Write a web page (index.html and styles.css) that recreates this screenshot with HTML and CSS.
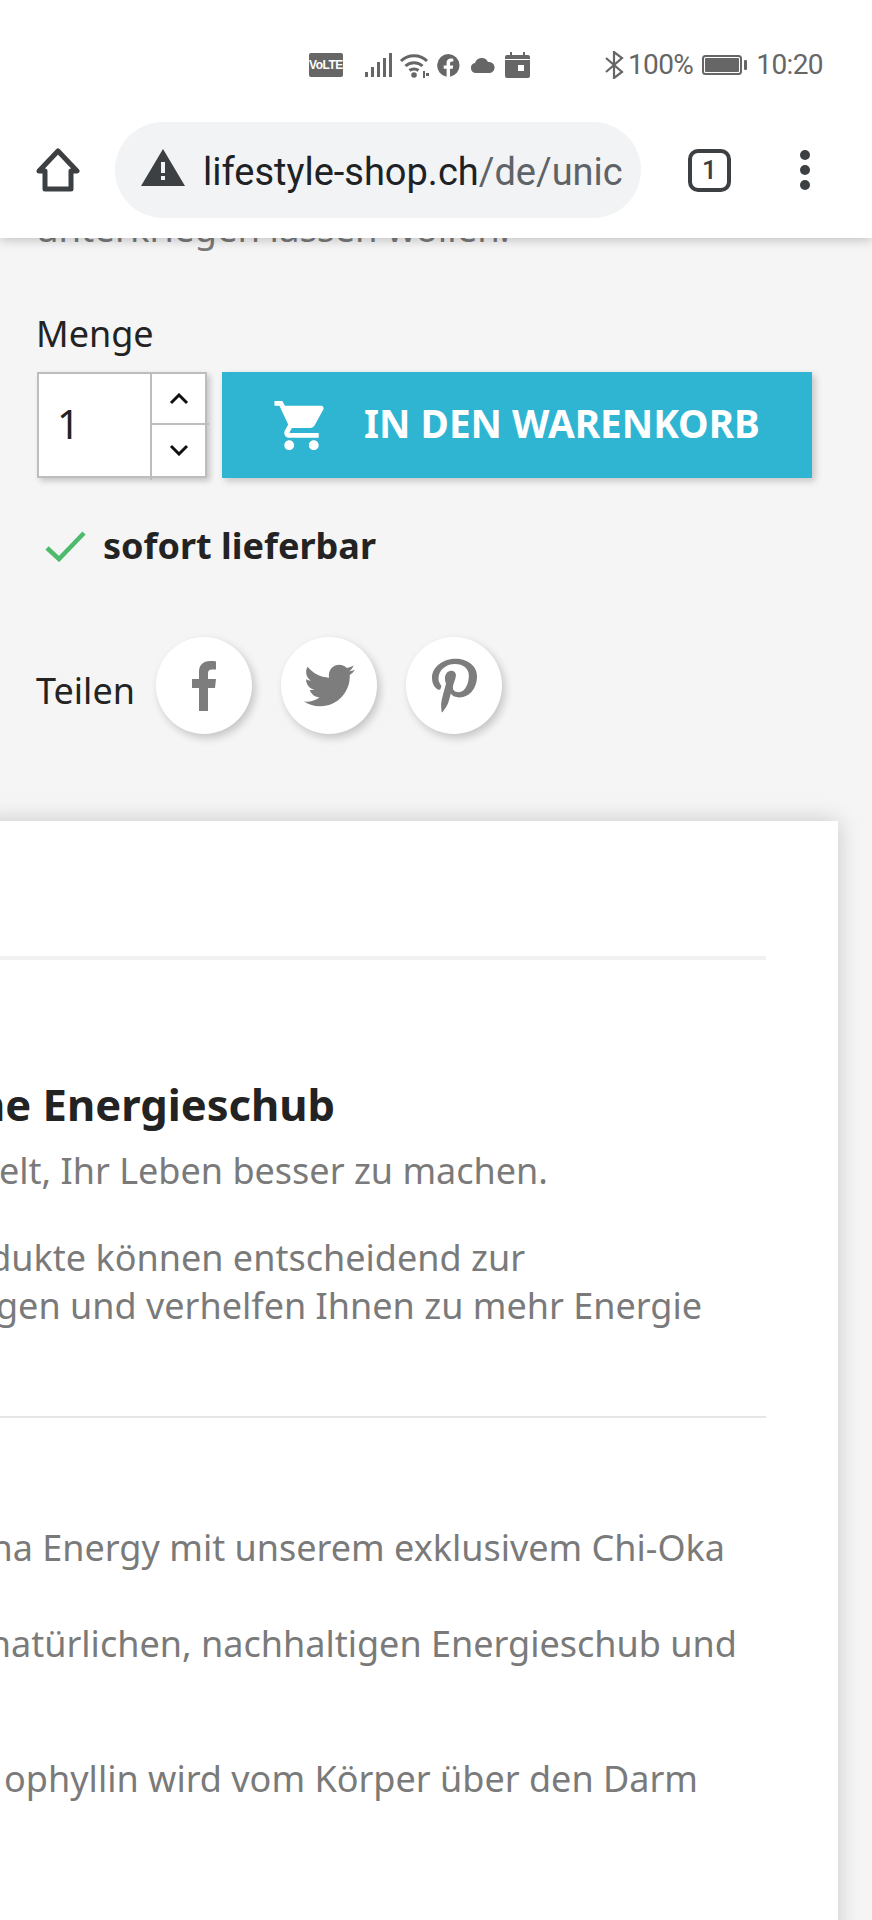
FILE: index.html
```html
<!DOCTYPE html>
<html lang="de">
<head>
<meta charset="utf-8">
<title>Lifestyle Shop</title>
<link rel="stylesheet" href="styles.css">
</head>
<body>
<header class="chrome">
  <div class="status">
    <span class="volte">VoLTE</span>
    <svg class="ic-signal" viewBox="0 0 27 24"><path d="M0 19h3v5H0zM6 14h3v10H6zM12 9h3v15h-3zM18 5h3v19h-3zM24 0h3v24h-3z"/></svg>
    <svg class="ic-wifi" viewBox="0 0 30 26"><path class="arc" d="M2 9c7-7 19-7 26 0M6.500 14c4.500-4.500 12.500-4.500 17 0M10.500 18.500c2.500-2 6.500-2 9 0"/><circle cx="15" cy="23" r="2.800"/><path d="M24 19h2v7h-2zM27 21h3v3h-3z"/></svg>
    <svg class="ic-fb" viewBox="0 0 24 24"><path d="M12 0a12 12 0 0 0-2 23.800v-8.400H7V12h3V9.400c0-3 1.800-4.600 4.500-4.600 1.300 0 2.500.2 2.500.2v2.900h-1.400c-1.500 0-2 .9-2 1.900V12h3.300l-.5 3.400h-2.800v8.400A12 12 0 0 0 12 0z"/></svg>
    <svg class="ic-cloud" viewBox="0 0 24 16"><path d="M5 16a5 5 0 0 1-1-9.900A7 7 0 0 1 17 5a5.500 5.500 0 0 1 2 11z"/></svg>
    <svg class="ic-cal" viewBox="0 0 25 26"><path fill-rule="evenodd" d="M5 0h2v3h11V0h2v3h3a2 2 0 0 1 2 2v19a2 2 0 0 1-2 2H2a2 2 0 0 1-2-2V5a2 2 0 0 1 2-2h3zM0 7v1h25V7zM13 13v6h6v-6z"/></svg>
    <svg class="ic-bt" viewBox="0 0 20 28"><path class="arc thin" d="M2 7l16 14-8 6V1l8 6L2 21"/></svg>
    <span class="pct">100%</span>
    <svg class="ic-bat" viewBox="0 0 45 20"><rect class="batline" x="1" y="1" width="38" height="18" rx="2.500"/><rect x="3" y="3" width="34" height="14" rx="1"/><rect x="42" y="5" width="3" height="10" rx="1"/></svg>
    <span class="time">10:20</span>
  </div>
  <div class="toolbar">
    <svg class="ic-home" viewBox="0 0 44 44"><path d="M22 3 41 23H35V41H9V23H3Z"/></svg>
    <div class="omnibox">
      <svg class="ic-warn" viewBox="0 0 44 37"><path fill-rule="evenodd" d="M22 0 44 37H0ZM20 13v11h4V13zM20 27v4h4v-4z"/></svg>
      <span class="url"><span class="host">lifestyle-shop.ch</span>/de/unic</span>
    </div>
    <span class="tabs">1</span>
    <span class="dots"><i></i><i></i><i></i></span>
  </div>
</header>
<main class="page">
  <p class="clipped">unterkriegen lassen wollen.</p>
  <label class="menge">Menge</label>
  <div class="buy">
    <div class="qty">
      <span class="qty-val">1</span>
      <span class="qty-btn"><svg viewBox="0 0 20 12"><path d="M2 10l8-8 8 8"/></svg></span>
      <span class="qty-btn qty-down"><svg viewBox="0 0 20 12"><path d="M2 2l8 8 8-8"/></svg></span>
    </div>
    <button class="cart">
      <svg viewBox="0 0 24 24"><path d="M7 18c-1.100 0-1.990.9-1.990 2S5.900 22 7 22s2-.9 2-2-.9-2-2-2zM1 2v2h2l3.600 7.590-1.350 2.450c-.16.28-.25.61-.25.96 0 1.100.9 2 2 2h12v-2H7.420c-.14 0-.25-.11-.25-.25l.03-.12.9-1.630h7.450c.75 0 1.410-.41 1.750-1.030l3.580-6.490c.08-.14.12-.31.12-.48 0-.55-.45-1-1-1H5.210l-.94-2H1zm16 16c-1.100 0-1.990.9-1.990 2s.89 2 1.990 2 2-.9 2-2-.9-2-2-2z"/></svg>
      <span>IN DEN WARENKORB</span>
    </button>
  </div>
  <div class="avail">
    <svg viewBox="0 0 41 31"><path d="M2 17l12 11L39 2"/></svg>
    <strong>sofort lieferbar</strong>
  </div>
  <div class="share">
    <span class="share-label">Teilen</span>
    <a class="soc"><svg class="s-fb" viewBox="0 0 24 50"><path d="M7 50V27H0v-9h7v-7C7 4 11 0 18 0c3 0 5 .2 6 .4v8h-4c-3 0-4 1.500-4 4v5.600h8l-1 9h-7v23z"/></svg></a>
    <a class="soc"><svg class="s-tw" viewBox="0 0 512 512"><path d="M459.370 151.716c.325 4.548.325 9.097.325 13.645 0 138.720-105.583 298.558-298.558 298.558-59.452 0-114.680-17.219-161.137-47.106 8.447.974 16.568 1.299 25.340 1.299 49.055 0 94.213-16.568 130.274-44.832-46.132-.975-84.792-31.188-98.112-72.772 6.498.974 12.995 1.624 19.818 1.624 9.421 0 18.843-1.300 27.614-3.573-48.081-9.747-84.143-51.980-84.143-102.985v-1.299c13.969 7.797 30.214 12.670 47.431 13.319-28.264-18.843-46.781-51.005-46.781-87.391 0-19.492 5.197-37.360 14.294-52.954 51.655 63.675 129.300 105.258 216.365 109.807-1.624-7.797-2.599-15.918-2.599-24.040 0-57.828 46.782-104.934 104.934-104.934 30.213 0 57.502 12.670 76.670 33.137 23.715-4.548 46.456-13.320 66.599-25.340-7.798 24.366-24.366 44.833-46.132 57.827 21.117-2.273 41.584-8.122 60.426-16.243-14.292 20.791-32.161 39.308-52.628 54.253z"/></svg></a>
    <a class="soc"><svg class="s-pin" viewBox="0 0 384 512" preserveAspectRatio="none"><path d="M204 6.500C101.400 6.500 0 74.900 0 185.600 0 256 39.600 296 63.600 296c9.900 0 15.600-27.600 15.600-35.400 0-9.300-23.700-29.100-23.700-67.800 0-80.400 61.200-137.400 140.400-137.400 68.100 0 118.500 38.700 118.500 109.800 0 53.100-21.300 152.700-90.300 152.700-24.900 0-46.200-18-46.200-43.800 0-37.800 26.400-74.400 26.400-113.400 0-66.200-93.900-54.200-93.900 25.800 0 16.800 2.100 35.400 9.600 50.700-13.800 59.400-42 147.900-42 209.100 0 18.900 2.700 37.500 4.500 56.400 3.400 3.800 1.700 3.400 6.900 1.500 50.400-69 48.600-82.500 71.400-172.800 12.300 23.400 44.100 36 69.300 36 106.200 0 153.900-103.500 153.900-196.800C384 71.300 298.200 6.500 204 6.500z"/></svg></a>
  </div>
  <section class="card">
    <hr class="rule-top">
    <h2 class="ln head">ne Energieschub</h2>
    <p class="ln l1">elt, Ihr Leben besser zu machen.</p>
    <p class="ln l2">dukte können entscheidend zur</p>
    <p class="ln l3">gen und verhelfen Ihnen zu mehr Energie</p>
    <hr class="rule-mid">
    <p class="ln l4">na Energy mit unserem exklusivem Chi-Oka</p>
    <p class="ln l5">natürlichen, nachhaltigen Energieschub und</p>
    <p class="ln l6">ophyllin wird vom Körper über den Darm</p>
  </section>
</main>
</body>
</html>
```
FILE: styles.css
```css
* { box-sizing: border-box; }
html, body { margin: 0; padding: 0; height: 1920px; overflow: hidden; }
body { width: 872px; background: #f5f5f5; font-family: "Noto Sans", sans-serif; font-size: 36px; line-height: 48px; color: #232323; }

.chrome { position: relative; z-index: 2; height: 238px; background: #fff; box-shadow: 0 2px 10px rgba(0,0,0,.22); }
.status { height: 102px; padding: 28px 49px 0 0; display: flex; align-items: center; justify-content: flex-end; color: #666; fill: #666; font-family: Roboto, sans-serif; font-size: 28px; letter-spacing: -.6px; }
.status svg { display: block; flex: none; }
.arc { fill: none; stroke: #666; stroke-width: 3; }
.arc.thin { stroke-width: 2.200; }
.volte { width: 34px; height: 24px; background: #666; color: #fff; border-radius: 2px; font: 700 12px/24px "Liberation Sans", sans-serif; letter-spacing: -.5px; text-align: center; }
.ic-signal { width: 27px; height: 24px; margin-left: 22px; }
.ic-wifi { width: 30px; height: 26px; margin-left: 7px; }
.ic-fb { width: 23px; height: 23px; margin-left: 8px; }
.ic-cloud { width: 24px; height: 16px; margin-left: 11px; }
.ic-cal { width: 25px; height: 26px; margin-left: 10px; }
.ic-bt { width: 20px; height: 28px; margin-left: 74px; }
.pct { margin-left: 4px; }
.ic-bat { width: 45px; height: 20px; margin-left: 9px; }
.batline { fill: none; stroke: #666; stroke-width: 2; }
.time { margin-left: 9px; }

.toolbar { height: 136px; display: flex; align-items: center; }
.ic-home { width: 44px; height: 44px; margin-left: 36px; fill: none; stroke: #3c4043; stroke-width: 5; stroke-linejoin: round; flex: none; }
.omnibox { width: 526px; height: 96px; margin-left: 35px; padding: 0 18px 0 26px; background: #f1f3f4; border-radius: 48px; display: flex; align-items: center; flex: none; }
.ic-warn { width: 44px; height: 37px; margin-bottom: 5px; fill: #3c4043; flex: none; }
.url { margin: 3px 0 0 18px; white-space: nowrap; font: 38px/48px Roboto, sans-serif; color: #5f6368; }
.host { color: #202124; }
.tabs { width: 43px; height: 43px; margin-left: 47px; border: 4px solid #3c4043; border-radius: 10px; font: 500 26px/35px Roboto, sans-serif; color: #3c4043; text-align: center; flex: none; }
.dots { margin-left: 69px; display: flex; flex-direction: column; gap: 5px; flex: none; }
.dots i { width: 10px; height: 10px; border-radius: 50%; background: #3c4043; }

.page { display: block; }
.clipped { margin: -34px 0 0 36px; color: #7a7a7a; font-size: 36.500px; }
.menge { display: block; margin: 58px 0 0 36px; }
.buy { margin: 14px 0 0 37px; display: flex; align-items: stretch; }
.qty { width: 170px; height: 106px; display: grid; grid-template-columns: 113px 57px; grid-template-rows: 49px 57px; border: 2px solid #bdbdbd; background: #fff; box-shadow: 3px 3px 6px rgba(0,0,0,.2); }
.qty-val { grid-row: 1 / 3; padding-left: 18px; line-height: 100px; border-right: 2px solid #bdbdbd; font-size: 40px; }
.qty-btn { display: flex; align-items: center; justify-content: center; padding-right: 4px; }
.qty-btn.qty-down { border-top: 2px solid #bdbdbd; padding-bottom: 5px; }
.qty-btn svg { width: 20px; height: 12px; fill: none; stroke: #111; stroke-width: 3; }
.cart { width: 590px; height: 106px; margin-left: 15px; padding: 0 0 0 50px; border: 0; background: #2fb5d2; color: #fff; display: flex; align-items: center; font: 700 38.700px/48px "Noto Sans", sans-serif; box-shadow: 3px 3px 7px rgba(0,0,0,.2); }
.cart svg { width: 59px; height: 59px; fill: #fff; flex: none; }
.cart span { margin: 0 0 5px 33px; }
.avail { margin: 44px 0 0 45px; display: flex; align-items: center; }
.avail svg { width: 41px; height: 31px; fill: none; stroke: #4cbb6c; stroke-width: 4.500; flex: none; }
.avail strong { margin-left: 17px; font-size: 36px; font-weight: 700; }
.share { margin: 67px 0 0 36px; display: flex; align-items: center; }
.share-label { padding-top: 11px; width: 120px; }
.soc { width: 96px; height: 97px; margin-right: 29px; border-radius: 50%; background: #fff; box-shadow: 3px 4px 8px rgba(0,0,0,.2); display: flex; align-items: center; justify-content: center; fill: #7d7d7d; }
.s-fb { width: 24px; height: 50px; }
.s-tw { width: 51px; height: 51px; }
.s-pin { width: 45px; height: 55px; }

.card { width: 858px; height: 1200px; margin: 87px 0 0 -20px; padding: 135px 72px 0 0; background: #fff; box-shadow: 0 0 22px rgba(0,0,0,.18); color: #7a7a7a; }
.rule-top { margin: 0; height: 4px; border: 0; background: #f1f1f1; }
.rule-mid { margin: 86px 0 0; height: 2px; border: 0; background: #e6e6e6; }
.ln { margin: 0; display: flex; justify-content: flex-end; white-space: nowrap; }
.head { margin-top: 116px; margin-right: 431px; font-size: 43.500px; line-height: 56px; font-weight: 700; color: #232323; }
.l1 { margin-top: 15px; margin-right: 218px; }
.l2 { margin-top: 39px; margin-right: 241px; }
.l3 { margin-right: 64px; }
.l4 { margin-top: 106px; margin-right: 41px; }
.l5 { margin-top: 48px; margin-right: 29px; }
.l6 { margin-top: 87px; margin-right: 68px; }
```
